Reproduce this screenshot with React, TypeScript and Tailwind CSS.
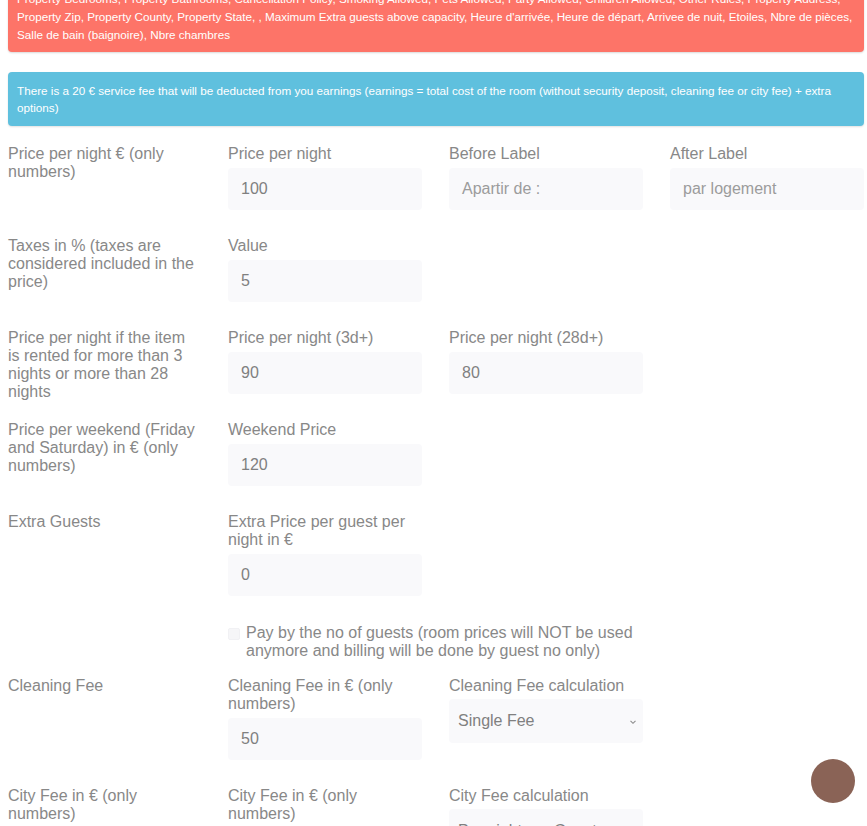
import React from "react";

const font = { fontFamily: '"Liberation Sans", Arial, sans-serif' };

function Field({
  label,
  value,
  placeholder,
  extra,
}: {
  label: string;
  value?: string;
  placeholder?: string;
  extra?: boolean;
}) {
  return (
    <div className={`w-[221px] shrink-0 ${extra ? "mb-[28px]" : "mb-[27px]"}`}>
      <div className="w-[194px] text-[16px] leading-[18px] text-[#888]">{label}</div>
      <div className="mt-[5px] flex h-[42px] w-[194px] items-center rounded bg-[#f9f9fb] pl-[13px] text-[16px]">
        {value ? (
          <span className="text-[#808080]">{value}</span>
        ) : (
          <span className="text-[#9c9c9c]">{placeholder}</span>
        )}
      </div>
    </div>
  );
}

function SelectField({ label, value }: { label: string; value: string }) {
  return (
    <div className="mb-[27px] w-[221px] shrink-0">
      <div className="w-[194px] text-[16px] leading-[18px] text-[#888]">{label}</div>
      <div className="mt-1 flex h-[44px] w-[194px] items-center justify-between rounded bg-[#f9f9fb] pl-[9px] pr-[5px] text-[16px] text-[#808080]">
        <span>{value}</span>
        <svg width="10" height="10" viewBox="0 0 10 10" className="mt-[1px]">
          <path d="M2.5 3.8 L5 6.3 L7.5 3.8" fill="none" stroke="#8c8c8c" strokeWidth="1.1" />
        </svg>
      </div>
    </div>
  );
}

function Row({ title, children }: { title: string; children?: React.ReactNode }) {
  return (
    <div className="flex items-start">
      <div className="mb-[20px] w-[220px] shrink-0">
        <div className="w-[190px] text-[16px] leading-[18px] text-[#888]">{title}</div>
      </div>
      {children}
    </div>
  );
}

export default function App() {
  return (
    <div className="min-h-screen bg-white pl-2 pr-[3px]" style={font}>
      <div className="-mt-[20px] overflow-hidden whitespace-nowrap rounded bg-[#fd7468] px-[9px] pb-[8px] pt-[10px] text-[11.7px] leading-[18px] text-white shadow-[0_1px_2px_rgba(0,0,0,0.15)]">
        <div>
          Property Bedrooms, Property Bathrooms, Cancellation Policy, Smoking Allowed, Pets Allowed, Party Allowed, Children Allowed, Other Rules, Property Address,
        </div>
        <div>
          Property Zip, Property County, Property State, , Maximum Extra guests above capacity, Heure d'arrivée, Heure de départ, Arrivee de nuit, Etoiles, Nbre de pièces,
        </div>
        <div>Salle de bain (baignoire), Nbre chambres</div>
      </div>

      <div className="mt-[20px] overflow-hidden whitespace-nowrap rounded bg-[#5fc0de] px-[9px] pb-[10px] pt-[10px] text-[11.7px] leading-[17px] text-white shadow-[0_1px_2px_rgba(0,0,0,0.12)]">
        <div>
          There is a 20 € service fee that will be deducted from you earnings (earnings = total cost of the room (without security deposit, cleaning fee or city fee) + extra
        </div>
        <div>options)</div>
      </div>

      <div className="mt-[19px]">
        <Row title="Price per night € (only numbers)">
          <Field label="Price per night" value="100" />
          <Field label="Before Label" placeholder="Apartir de :" />
          <Field label="After Label" placeholder="par logement" />
        </Row>

        <Row title="Taxes in % (taxes are considered included in the price)">
          <Field label="Value" value="5" />
        </Row>

        <Row title="Price per night if the item is rented for more than 3 nights or more than 28 nights">
          <Field label="Price per night (3d+)" value="90" />
          <Field label="Price per night (28d+)" value="80" />
        </Row>

        <Row title="Price per weekend (Friday and Saturday) in € (only numbers)">
          <Field label="Weekend Price" value="120" />
        </Row>

        <Row title="Extra Guests">
          <Field label="Extra Price per guest per night in €" value="0" extra />
        </Row>

        <div className="mb-[17px] flex items-start pl-[220px]">
          <div className="mt-[4px] h-[12px] w-[12px] shrink-0 rounded-[2px] border border-[#f1f1f4] bg-[#f6f6f8]" />
          <div className="ml-[6px] w-[420px] text-[16px] leading-[18px] text-[#888]">
            Pay by the no of guests (room prices will NOT be used anymore and billing will be done by guest no only)
          </div>
        </div>

        <Row title="Cleaning Fee">
          <Field label="Cleaning Fee in € (only numbers)" value="50" />
          <SelectField label="Cleaning Fee calculation" value="Single Fee" />
        </Row>

        <Row title="City Fee in € (only numbers)">
          <Field label="City Fee in € (only numbers)" value="0" />
          <SelectField label="City Fee calculation" value="Per night per Guest" />
        </Row>
      </div>

      <div className="fixed bottom-[23px] right-[12px] h-[44px] w-[44px] rounded-full bg-[#8a6356]" />
    </div>
  );
}
